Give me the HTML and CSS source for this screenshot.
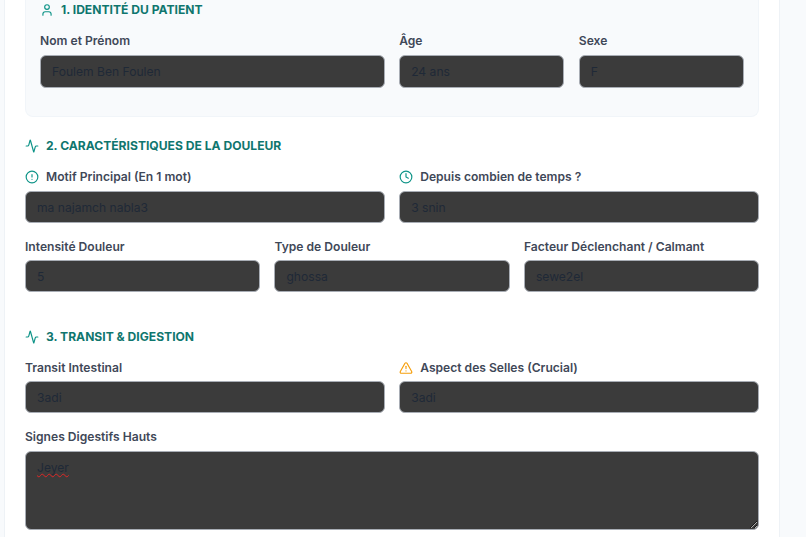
FILE: index.html
```html
<!DOCTYPE html>
<html lang="fr">
<head>
<meta charset="utf-8">
<title>Fiche patient</title>
<link rel="stylesheet" href="styles.css">
</head>
<body>
<main class="card">
  <section class="panel">
    <h2 class="heading">
      <svg class="icon" viewBox="0 0 24 24"><path d="M19 21v-2a4 4 0 0 0-4-4H9a4 4 0 0 0-4 4v2"/><circle cx="12" cy="7" r="4"/></svg>
      1. IDENTITÉ DU PATIENT
    </h2>
    <div class="grid grid-four">
      <div class="field span-two"><label class="label">Nom et Prénom</label><input class="input" value="Foulem Ben Foulen"></div>
      <div class="field"><label class="label">Âge</label><input class="input" value="24 ans"></div>
      <div class="field"><label class="label">Sexe</label><input class="input" value="F"></div>
    </div>
  </section>

  <section class="section section-two">
    <h2 class="heading">
      <svg class="icon" viewBox="0 0 24 24"><path d="M22 12h-2.48a2 2 0 0 0-1.93 1.46l-2.35 8.36a.25.25 0 0 1-.48 0L9.24 2.18a.25.25 0 0 0-.48 0l-2.35 8.36A2 2 0 0 1 4.49 12H2"/></svg>
      2. CARACTÉRISTIQUES DE LA DOULEUR
    </h2>
    <div class="grid grid-two">
      <div class="field"><label class="label"><svg class="icon" viewBox="0 0 24 24"><circle cx="12" cy="12" r="10"/><line x1="12" y1="8" x2="12" y2="12"/><line x1="12" y1="16" x2="12.01" y2="16"/></svg>Motif Principal (En 1 mot)</label><input class="input input-inset" value="ma najamch nabla3"></div>
      <div class="field"><label class="label"><svg class="icon" viewBox="0 0 24 24"><circle cx="12" cy="12" r="10"/><polyline points="12 6 12 12 16 14"/></svg>Depuis combien de temps ?</label><input class="input input-inset" value="3 snin"></div>
    </div>
    <div class="grid grid-three">
      <div class="field"><label class="label">Intensité Douleur</label><input class="input input-inset" value="5"></div>
      <div class="field"><label class="label">Type de Douleur</label><input class="input input-inset" value="ghossa"></div>
      <div class="field"><label class="label">Facteur Déclenchant / Calmant</label><input class="input input-inset" value="sewe2el"></div>
    </div>
  </section>

  <section class="section section-three">
    <h2 class="heading">
      <svg class="icon" viewBox="0 0 24 24"><path d="M22 12h-2.48a2 2 0 0 0-1.93 1.46l-2.35 8.36a.25.25 0 0 1-.48 0L9.24 2.18a.25.25 0 0 0-.48 0l-2.35 8.36A2 2 0 0 1 4.49 12H2"/></svg>
      3. TRANSIT &amp; DIGESTION
    </h2>
    <div class="grid grid-two">
      <div class="field"><label class="label">Transit Intestinal</label><input class="input input-inset" value="3adi"></div>
      <div class="field"><label class="label"><svg class="icon icon-warn" viewBox="0 0 24 24"><path d="m21.73 18-8-14a2 2 0 0 0-3.48 0l-8 14A2 2 0 0 0 4 21h16a2 2 0 0 0 1.73-3Z"/><line x1="12" y1="9" x2="12" y2="13"/><line x1="12" y1="17" x2="12.01" y2="17"/></svg>Aspect des Selles (Crucial)</label><input class="input input-inset" value="3adi"></div>
    </div>
    <div class="field"><label class="label">Signes Digestifs Hauts</label><textarea class="input input-inset textarea">Jeyer</textarea></div>
  </section>
</main>
</body>
</html>
```
FILE: styles.css
```css
* { box-sizing: border-box; }
html, body { margin: 0; height: 537px; overflow: hidden; }
body { background: #f8fafc; font-family: Inter, "Liberation Sans", sans-serif; color: #334155; }

.card {
  margin-left: 4px;
  width: 776px;
  min-height: 537px;
  padding: 0 20px;
  background: #fff;
  border-left: 1px solid #eef2f6;
  border-right: 1px solid #eef2f6;
}

.panel {
  height: 117px;
  padding: 1px 14px 0;
  background: #f8fafc;
  border: 1px solid #f1f5f9;
  border-top: 0;
  border-radius: 0 0 8px 8px;
}

.heading {
  display: flex;
  align-items: center;
  gap: 7px;
  margin: 0 0 13px;
  height: 18px;
  font-size: 12.1px;
  line-height: 18px;
  font-weight: 700;
  color: #0f766e;
}

.icon {
  flex: none;
  width: 14px;
  height: 14px;
  fill: none;
  stroke: #0f9488;
  stroke-width: 2;
  stroke-linecap: round;
  stroke-linejoin: round;
}
.icon-warn { stroke: #f59e0b; }

.grid { display: grid; column-gap: 14.4px; }
.grid-four { grid-template-columns: repeat(4, 1fr); }
.grid-two { grid-template-columns: 1fr 1fr; }
.grid-three { grid-template-columns: repeat(3, 1fr); margin-top: 15px; }
.grid-three .field { gap: 4px; }
.span-two { grid-column: span 2; }

.field { display: flex; flex-direction: column; gap: 5px; min-width: 0; }
.section-three .grid-two .field { gap: 4px; }
.section-three > .field { margin-top: 15px; }

.label {
  display: flex;
  align-items: center;
  gap: 7px;
  height: 18px;
  font-size: 12.1px;
  line-height: 18px;
  font-weight: 600;
  color: #3f4858;
}

.input {
  display: block;
  width: 100%;
  height: 33px;
  padding: 0 11px;
  background: #3b3b3b;
  border: 1px solid #a8adb5;
  border-radius: 6px;
  outline: 0;
  font: 400 12.1px Inter, "Liberation Sans", sans-serif;
  color: #1f2937;
}
.input-inset { height: 32px; }

.textarea {
  height: 79px;
  padding: 7px 11px;
  line-height: 18px;
  resize: vertical;
  text-decoration: underline wavy #dc2626 1px;
  text-decoration-skip-ink: none;
}

.section-two { margin-top: 20px; }
.section-three { margin-top: 36px; }
```
